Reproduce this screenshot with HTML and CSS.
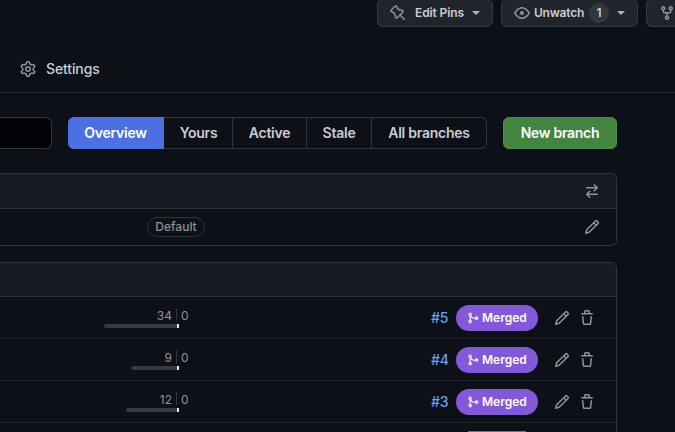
FILE: index.html
```html
<!DOCTYPE html>
<html lang="en">
<head>
<meta charset="utf-8">
<title>Branches</title>
<link rel="stylesheet" href="styles.css">
</head>
<body>
<svg class="sprite" aria-hidden="true">
<symbol id="pin" viewBox="0 0 16 16"><path fill-rule="evenodd" d="M4.456.734a1.75 1.75 0 012.826.504l.613 1.327a3.081 3.081 0 002.084 1.707l2.454.584c1.332.317 1.8 1.972.832 2.94L11.06 10l3.72 3.72a.75.75 0 11-1.061 1.06L10 11.06l-2.204 2.205c-.968.968-2.623.5-2.94-.832l-.584-2.454a3.081 3.081 0 00-1.707-2.084l-1.327-.613a1.75 1.75 0 01-.504-2.826L4.456.734zM5.92 1.866a.25.25 0 00-.404-.072L1.794 5.516a.25.25 0 00.072.404l1.328.613A4.582 4.582 0 015.73 9.63l.584 2.454a.25.25 0 00.42.12l5.47-5.47a.25.25 0 00-.12-.42L9.63 5.73a4.581 4.581 0 01-3.098-2.537L5.92 1.866z"/></symbol>
<symbol id="eye" viewBox="0 0 16 16"><path d="M8 2c1.981 0 3.671.992 4.933 2.078 1.27 1.091 2.187 2.345 2.637 3.023a1.62 1.62 0 0 1 0 1.798c-.45.678-1.367 1.932-2.637 3.023C11.67 13.008 9.981 14 8 14c-1.981 0-3.671-.992-4.933-2.078C1.797 10.83.88 9.576.43 8.898a1.62 1.62 0 0 1 0-1.798c.45-.677 1.367-1.931 2.637-3.022C4.33 2.992 6.019 2 8 2ZM1.679 7.932a.12.12 0 0 0 0 .136c.411.622 1.241 1.75 2.366 2.717C5.176 11.758 6.527 12.5 8 12.5c1.473 0 2.825-.742 3.955-1.715 1.124-.967 1.954-2.096 2.366-2.717a.12.12 0 0 0 0-.136c-.412-.621-1.242-1.75-2.366-2.717C10.824 4.242 9.473 3.5 8 3.5c-1.473 0-2.825.742-3.955 1.715-1.124.967-1.954 2.096-2.366 2.717ZM8 10a2 2 0 1 1-.001-3.999A2 2 0 0 1 8 10Z"/></symbol>
<symbol id="fork" viewBox="0 0 16 16"><path d="M5 5.372v.878c0 .414.336.75.75.75h4.5a.75.75 0 0 0 .75-.75v-.878a2.25 2.25 0 1 1 1.5 0v.878a2.25 2.25 0 0 1-2.25 2.25h-1.5v2.128a2.251 2.251 0 1 1-1.5 0V8.5h-1.5A2.25 2.25 0 0 1 3.5 6.25v-.878a2.25 2.25 0 1 1 1.5 0ZM5 3.25a.75.75 0 1 0-1.5 0 .75.75 0 0 0 1.5 0Zm6.75.75a.75.75 0 1 0 0-1.5.75.75 0 0 0 0 1.5Zm-3 8.75a.75.75 0 1 0-1.5 0 .75.75 0 0 0 1.5 0Z"/></symbol>
<symbol id="gear" viewBox="0 0 16 16"><path d="M8 0a8.2 8.2 0 0 1 .701.031C9.444.095 9.99.645 10.16 1.29l.288 1.107c.018.066.079.158.212.224.231.114.454.243.668.386.123.082.233.09.299.071l1.103-.303c.644-.176 1.392.021 1.82.63.27.385.506.792.704 1.218.315.675.111 1.422-.364 1.891l-.814.806c-.049.048-.098.147-.088.294.016.257.016.515 0 .772-.01.147.038.246.088.294l.814.806c.475.469.679 1.216.364 1.891a7.977 7.977 0 0 1-.704 1.217c-.428.61-1.176.807-1.82.63l-1.102-.302c-.067-.019-.177-.011-.3.071a5.909 5.909 0 0 1-.668.386c-.133.066-.194.158-.211.224l-.29 1.106c-.168.646-.715 1.196-1.458 1.26a8.006 8.006 0 0 1-1.402 0c-.743-.064-1.289-.614-1.458-1.26l-.289-1.106c-.018-.066-.079-.158-.212-.224a5.738 5.738 0 0 1-.668-.386c-.123-.082-.233-.09-.299-.071l-1.103.303c-.644.176-1.392-.021-1.82-.63a8.12 8.12 0 0 1-.704-1.218c-.315-.675-.111-1.422.363-1.891l.815-.806c.05-.048.098-.147.088-.294a6.214 6.214 0 0 1 0-.772c.01-.147-.038-.246-.088-.294l-.815-.806C.635 6.045.431 5.298.746 4.623a7.92 7.92 0 0 1 .704-1.217c.428-.61 1.176-.807 1.82-.63l1.102.302c.067.019.177.011.3-.071.214-.143.437-.272.668-.386.133-.066.194-.158.211-.224l.29-1.106C6.009.645 6.556.095 7.299.03 7.53.01 7.764 0 8 0Zm-.571 1.525c-.036.003-.108.036-.137.146l-.289 1.105c-.147.561-.549.967-.998 1.189-.173.086-.34.183-.5.29-.417.278-.97.423-1.529.27l-1.103-.303c-.109-.03-.175.016-.195.045-.22.312-.412.644-.573.99-.014.031-.021.11.059.19l.815.806c.411.406.562.957.53 1.456a4.709 4.709 0 0 0 0 .582c.032.499-.119 1.05-.53 1.456l-.815.806c-.081.08-.073.159-.059.19.162.346.353.677.573.989.02.03.085.076.195.046l1.102-.303c.56-.153 1.113-.008 1.53.27.161.107.328.204.501.29.447.222.85.629.997 1.189l.289 1.105c.029.109.101.143.137.146a6.6 6.6 0 0 0 1.142 0c.036-.003.108-.036.137-.146l.289-1.105c.147-.561.549-.967.998-1.189.173-.086.34-.183.5-.29.417-.278.97-.423 1.529-.27l1.103.303c.109.029.175-.016.195-.045.22-.313.411-.644.573-.99.014-.031.021-.11-.059-.19l-.815-.806c-.411-.406-.562-.957-.53-1.456a4.709 4.709 0 0 0 0-.582c-.032-.499.119-1.05.53-1.456l.815-.806c.081-.08.073-.159.059-.19a6.464 6.464 0 0 0-.573-.989c-.02-.03-.085-.076-.195-.046l-1.102.303c-.56.153-1.113.008-1.53-.27a4.44 4.44 0 0 0-.501-.29c-.447-.222-.85-.629-.997-1.189l-.289-1.105c-.029-.11-.101-.143-.137-.146a6.6 6.6 0 0 0-1.142 0ZM11 8a3 3 0 1 1-6 0 3 3 0 0 1 6 0ZM9.5 8a1.5 1.5 0 1 0-3.001.001A1.5 1.5 0 0 0 9.5 8Z"/></symbol>
<symbol id="switch" viewBox="0 0 16 16"><path d="M5.22 14.78a.75.75 0 0 0 1.06-1.06L4.56 12h8.69a.75.75 0 0 0 0-1.5H4.56l1.72-1.72a.75.75 0 0 0-1.06-1.06l-3 3a.75.75 0 0 0 0 1.06l3 3Zm5.56-6.5a.75.75 0 1 1-1.06-1.06l1.72-1.72H2.75a.75.75 0 0 1 0-1.5h8.69L9.72 2.28a.75.75 0 0 1 1.06-1.06l3 3a.75.75 0 0 1 0 1.06l-3 3Z"/></symbol>
<symbol id="pencil" viewBox="0 0 16 16"><path d="M11.013 1.427a1.75 1.75 0 0 1 2.474 0l1.086 1.086a1.75 1.75 0 0 1 0 2.474l-8.61 8.61c-.21.21-.47.364-.756.445l-3.251.93a.75.75 0 0 1-.927-.928l.929-3.25c.081-.286.235-.547.445-.758l8.61-8.61Zm.176 4.823L9.75 4.81l-6.286 6.287a.253.253 0 0 0-.064.108l-.558 1.953 1.953-.558a.253.253 0 0 0 .108-.064Zm1.238-3.763a.25.25 0 0 0-.354 0L10.811 3.75l1.439 1.44 1.263-1.263a.25.25 0 0 0 0-.354Z"/></symbol>
<symbol id="trash" viewBox="0 0 16 16"><path d="M11 1.75V3h2.25a.75.75 0 0 1 0 1.5H2.75a.75.75 0 0 1 0-1.5H5V1.75C5 .784 5.784 0 6.75 0h2.5C10.216 0 11 .784 11 1.75ZM4.496 6.675l.66 6.6a.25.25 0 0 0 .249.225h5.19a.25.25 0 0 0 .249-.225l.66-6.6a.75.75 0 0 1 1.492.149l-.66 6.6A1.748 1.748 0 0 1 10.595 15h-5.19a1.75 1.75 0 0 1-1.741-1.575l-.66-6.6a.75.75 0 1 1 1.492-.15ZM6.5 1.75V3h3V1.75a.25.25 0 0 0-.25-.25h-2.5a.25.25 0 0 0-.25.25Z"/></symbol>
<symbol id="merge" viewBox="0 0 16 16"><path d="M5.45 5.154A4.25 4.25 0 0 0 9.25 7.5h1.378a2.251 2.251 0 1 1 0 1.5H9.25A5.734 5.734 0 0 1 5 7.123v3.505a2.25 2.25 0 1 1-1.5 0V5.372a2.25 2.25 0 1 1 1.95-.218ZM4.25 13.5a.75.75 0 1 0 0-1.5.75.75 0 0 0 0 1.5Zm8.5-4.5a.75.75 0 1 0 0-1.5.75.75 0 0 0 0 1.5ZM5 3.25a.75.75 0 1 0 0 .005V3.25Z"/></symbol>
</svg>

<header class="header">
  <div class="actions">
    <button class="action edit"><svg class="icon"><use href="#pin"/></svg><span class="action-text">Edit Pins</span><i class="caret"></i></button>
    <button class="action watch"><svg class="icon"><use href="#eye"/></svg><span class="action-text">Unwatch</span><span class="count">1</span><i class="caret"></i></button>
    <button class="action forks"><svg class="icon"><use href="#fork"/></svg></button>
  </div>
  <nav class="nav"><svg class="icon"><use href="#gear"/></svg><span class="nav-text">Settings</span></nav>
</header>

<main class="main">
  <div class="toolbar">
    <div class="search"></div>
    <div class="tabs">
      <a class="tab selected">Overview</a>
      <a class="tab yours">Yours</a>
      <a class="tab active">Active</a>
      <a class="tab stale">Stale</a>
      <a class="tab all">All branches</a>
    </div>
    <button class="new">New branch</button>
  </div>

  <section class="box default-box">
    <div class="box-head"><svg class="icon"><use href="#switch"/></svg></div>
    <div class="default-row"><span class="label">Default</span><svg class="icon"><use href="#pencil"/></svg></div>
  </section>

  <section class="box branch-box">
    <div class="box-head"></div>
    <div class="row">
      <div class="diff"><div class="side behind"><span>34</span><i class="bar" style="width:73px"></i></div><div class="side ahead"><span>0</span><i class="bar"></i></div></div>
      <a class="pr">#5</a><span class="merged"><svg class="small-icon"><use href="#merge"/></svg>Merged</span>
      <svg class="icon edit-icon"><use href="#pencil"/></svg><svg class="icon"><use href="#trash"/></svg>
    </div>
    <div class="row">
      <div class="diff"><div class="side behind"><span>9</span><i class="bar" style="width:46px"></i></div><div class="side ahead"><span>0</span><i class="bar"></i></div></div>
      <a class="pr">#4</a><span class="merged"><svg class="small-icon"><use href="#merge"/></svg>Merged</span>
      <svg class="icon edit-icon"><use href="#pencil"/></svg><svg class="icon"><use href="#trash"/></svg>
    </div>
    <div class="row">
      <div class="diff"><div class="side behind"><span>12</span><i class="bar" style="width:51px"></i></div><div class="side ahead"><span>0</span><i class="bar"></i></div></div>
      <a class="pr">#3</a><span class="merged"><svg class="small-icon"><use href="#merge"/></svg>Merged</span>
      <svg class="icon edit-icon"><use href="#pencil"/></svg><svg class="icon"><use href="#trash"/></svg>
    </div>
    <div class="row partial"><span class="merged next"></span></div>
  </section>
</main>
</body>
</html>
```
FILE: styles.css
```css
* { box-sizing: border-box; }
body {
  margin: 0;
  height: 432px;
  overflow: hidden;
  background: #0d1016;
  color: #c9cdd5;
  font: 500 14px/20px Inter, "Liberation Sans", sans-serif;
}
button { font: inherit; color: inherit; margin: 0; }
.sprite { position: absolute; width: 0; height: 0; }
.icon { width: 16px; height: 16px; flex: none; fill: #8e939d; }

.header { height: 93px; border-bottom: 1px solid #22262c; }
.actions { display: flex; gap: 8px; margin-left: 377px; height: 27px; align-items: flex-end; }
.action {
  flex: none;
  display: flex;
  align-items: center;
  height: 28px;
  padding: 0 12px;
  border: 1px solid #363a42;
  border-radius: 6px;
  background: #21242b;
  font-size: 12px;
  font-weight: 600;
  letter-spacing: -0.12px;
  white-space: nowrap;
}
.edit { width: 116px; }
.edit .action-text { margin-left: 8px; width: 51px; }
.edit .caret { margin-left: 7px; }
.watch { width: 137px; }
.watch .action-text { margin-left: 3px; width: 52px; letter-spacing: -0.2px; }
.watch .caret { margin-left: 8px; }
.forks { width: 29px; border-right: 0; border-radius: 6px 0 0 6px; padding-right: 0; }
.caret { flex: none; border: 4px solid transparent; border-top-color: #afb3ba; border-bottom: 0; }
.count {
  flex: none;
  width: 20px;
  height: 20px;
  margin-left: 4px;
  border-radius: 10px;
  background: #32363e;
  text-align: center;
}
.nav { display: flex; align-items: center; gap: 10px; padding: 32px 0 0 20px; letter-spacing: -0.12px; }

.main { padding-top: 24px; }
.toolbar { display: flex; height: 32px; }
.search {
  width: 52px;
  background: #010206;
  border: 1px solid #30343b;
  border-left: 0;
  border-radius: 0 6px 6px 0;
}
.tabs { display: flex; width: 419px; margin: 0 16px; }
.tab {
  display: flex;
  align-items: center;
  justify-content: center;
  border: 1px solid #30343b;
  border-left: 0;
  font-weight: 600;
  letter-spacing: -0.25px;
  white-space: nowrap;
}
.selected { width: 96px; background: #4c6fe3; border-color: #4c6fe3; color: #fff; border-radius: 6px 0 0 6px; }
.yours { width: 69px; padding-left: 1px; }
.active { width: 74px; }
.stale { width: 65px; }
.all { width: 115px; border-radius: 0 6px 6px 0; }
.new { width: 114px; padding: 0; border: 1px solid #4f9049; border-radius: 6px; background: #438440; color: #fff; font-weight: 600; letter-spacing: -0.3px; white-space: nowrap; }

.box { width: 617px; border: 1px solid #30343b; border-left: 0; }
.box-head {
  display: flex;
  align-items: center;
  justify-content: flex-end;
  padding-right: 16px;
  background: #171a22;
  border-bottom: 1px solid #30343b;
  border-radius: 0 5px 0 0;
}
.default-box { margin-top: 24px; height: 73px; border-radius: 0 6px 6px 0; }
.default-box .box-head { height: 35px; }
.default-row { display: flex; height: 36px; align-items: center; justify-content: space-between; padding: 0 16px 0 147px; }
.label { width: 58px; height: 20px; border: 1px solid #30343b; border-radius: 10px; font-size: 12px; line-height: 18px; text-align: center; color: #8e939d; }
.branch-box { margin-top: 16px; height: 170px; border-radius: 0 6px 0 0; border-bottom: 0; }
.branch-box .box-head { height: 34px; }
.row { display: flex; align-items: center; height: 42px; border-bottom: 1px solid #20242a; }
.diff { display: flex; width: 190px; height: 20px; margin-right: 241px; font-size: 12px; font-weight: 400; line-height: 15px; color: #8e939d; }
.side { display: flex; flex-direction: column; height: 20px; }
.side span { height: 13px; margin-bottom: 3px; }
.bar { height: 4px; background: #363940; }
.behind { width: 177px; align-items: flex-end; }
.behind span { width: 30px; padding-right: 4px; border-right: 1px solid #30343b; text-align: right; }
.behind .bar { border-radius: 2px 0 0 2px; }
.ahead span { padding-left: 4px; }
.ahead .bar { width: 2px; background: #e8eaee; }
.pr { width: 25px; color: #65a1f4; letter-spacing: -0.2px; }
.merged {
  display: flex;
  align-items: center;
  width: 82px;
  height: 26px;
  padding-left: 11px;
  gap: 3px;
  border-radius: 13px;
  background: #8259d9;
  color: #fff;
  font-size: 12px;
  font-weight: 600;
}
.small-icon { width: 12px; height: 12px; fill: #fff; }
.edit-icon { margin: 0 9px 0 16px; }
.partial { align-items: flex-start; height: 9px; padding: 8px 0 0 456px; border: 0; overflow: hidden; }
.next { height: 1px; border-radius: 0; width: 58px; padding: 0; margin-left: 12px; }
```
